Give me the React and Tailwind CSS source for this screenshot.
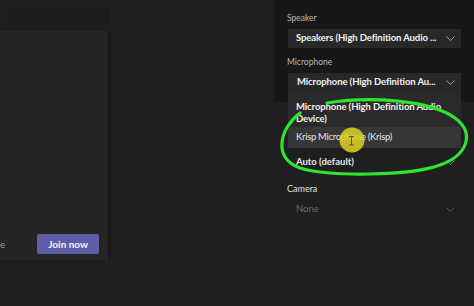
import React from "react";

const Chevron = ({ c = "#9a9a9a" }) => (
  <svg width="9" height="5" viewBox="0 0 9 5" className="shrink-0">
    <path d="M0.5 0.5 L4.5 4.5 L8.5 0.5" fill="none" stroke={c} strokeWidth="1" />
  </svg>
);

export default function App() {
  return (
    <div className="relative w-[474px] h-[306px] overflow-hidden bg-[#1f1f1f] flex font-['Lato',sans-serif]">
      {/* left area */}
      <div className="w-[274px] flex flex-col">
        <div className="h-[7px]" />
        <div className="ml-[8px] w-[102px] h-[17px] bg-[#1c1c1c]" />
        <div className="h-[7px]" />
        <div className="w-[111px] h-[229px] flex">
          <div className="w-[108px] h-full bg-[#252525] flex flex-col justify-end">
            <div className="flex items-center justify-end gap-[32px] pr-[9px] pb-[6px]">
              <span className="text-[10px] text-[#9a9a9a] leading-none">e</span>
              <div className="w-[62px] h-[20px] rounded-[2px] bg-[#5f5ca8] flex items-center justify-center text-[10px] font-bold text-[#f2f2fa]">
                Join now
              </div>
            </div>
          </div>
          <div className="w-[3px] h-full bg-[#1b1b1b]" />
        </div>
      </div>

      {/* right panel */}
      <div className="relative w-[200px] flex flex-col">
        <div className="h-[102px] bg-[#171717] pt-[12px] pl-[13px] pr-[13px] flex flex-col">
          <div className="h-[12px] leading-[12px] text-[8.5px] text-[#b8b8b8]">Speaker</div>
          <div className="mt-[5px] ml-[1px] h-[19px] bg-[#282828] flex items-center justify-between pl-[8px] pr-[6px] overflow-hidden">
            <span className="text-[9.5px] tracking-[-0.1px] font-bold text-[#f2f2f2] whitespace-nowrap">Speakers (High Definition Audio ...</span>
            <Chevron />
          </div>
          <div className="mt-[8px] h-[12px] leading-[12px] text-[8.5px] text-[#b8b8b8]">Microphone</div>
          <div className="mt-[5px] ml-[1px] h-[19px] bg-[#282828] flex items-center justify-between pl-[9px] pr-[6px] overflow-hidden">
            <span className="text-[9.5px] tracking-[-0.1px] font-bold text-[#f2f2f2] whitespace-nowrap">Microphone (High Definition Au...</span>
            <Chevron />
          </div>
        </div>
        <div className="flex flex-col pl-[13px] pr-[13px] pt-[50px]">
          <div className="ml-[1px] h-[20px] flex items-center justify-between pl-[8px] pr-[6px]">
            <span className="text-[9.5px] font-bold text-[#e8e8e8]">Auto (default)</span>
            <Chevron c="#7a7a7a" />
          </div>
          <div className="mt-[11px] h-[12px] leading-[12px] text-[9px] text-[#e0e0e0]">Camera</div>
          <div className="mt-[4px] ml-[1px] h-[20px] flex items-center justify-between pl-[8px] pr-[6px]">
            <span className="text-[9.5px] text-[#6a6a6a]">None</span>
            <Chevron c="#5a5a5a" />
          </div>
        </div>

        {/* open dropdown list */}
        <div className="absolute left-[14px] top-[92px] w-[173px] bg-[#2a2a2a] flex flex-col">
          <div className="h-[35px] pl-[8px] pr-[20px] pt-[9px] text-[9.5px] tracking-[-0.1px] leading-[12px] font-bold text-[#f2f2f2]">
            Microphone (High Definition Audio Device)
          </div>
          <div className="h-[21px] bg-[#363636] pl-[8px] flex items-center text-[9.5px] tracking-[-0.3px] text-[#e6e6e6]">
            Krisp Microphone (Krisp)
          </div>
        </div>
      </div>

      {/* annotation overlay */}
      <svg className="absolute inset-0 pointer-events-none" width="474" height="306" viewBox="0 0 474 306">
        <circle cx="352" cy="140" r="12.5" fill="rgba(220,212,36,0.85)" />
        <path d="M349 136.5 H354 M351.5 136.5 V145 M349 145 H354" stroke="#5a5420" strokeWidth="1" fill="none" />
        <path
          d="M327 103 C370 96 430 100 455 118 C475 133 468 155 440 165 C410 176 330 177 300 168 C272 158 280 128 300 113"
          fill="none"
          stroke="#2fe32f"
          strokeWidth="3.2"
          strokeLinecap="round"
        />
      </svg>
    </div>
  );
}
